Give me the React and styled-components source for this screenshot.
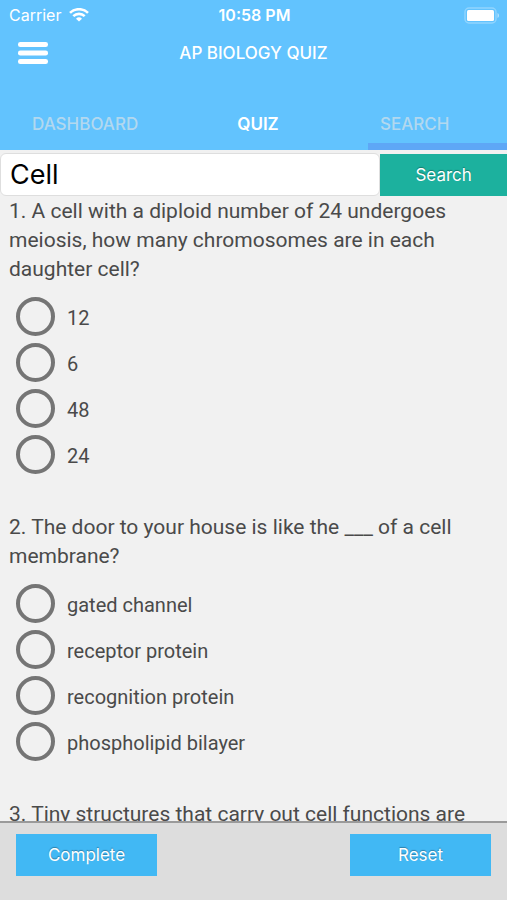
import React, { useState } from "react";
import styled, { createGlobalStyle } from "styled-components";

const GlobalStyle = createGlobalStyle`
  *, *::before, *::after { box-sizing: border-box; }
  body {
    margin: 0;
    background: #f1f1f1;
    color: #4a4a4a;
    font-family: Inter, Roboto, "Liberation Sans", sans-serif;
  }
  button, input { font-family: inherit; }
`;

const Screen = styled.div`
  display: flex;
  flex-direction: column;
  height: 100vh;
`;

const Header = styled.header`
  flex: none;
  background: #62c3fe;
  color: #fff;
`;

const StatusBar = styled.div`
  display: grid;
  grid-template-columns: 1fr auto 1fr;
  align-items: center;
  height: 30px;
  padding: 0 7px 0 9px;
  font-size: 16px;
  line-height: 20px;
`;

const Carrier = styled.span`
  display: flex;
  align-items: center;
  gap: 8px;
`;

const Clock = styled.time`
  font-weight: 600;
  font-size: 16px;
`;

const BatteryIcon = styled.svg`
  justify-self: end;
`;

const TitleBar = styled.div`
  display: grid;
  grid-template-columns: 1fr auto 1fr;
  align-items: center;
  height: 46px;
  padding: 0 18px;
`;

const MenuButton = styled.button`
  display: flex;
  width: 30px;
  padding: 0;
  border: 0;
  background: none;
  color: inherit;
  cursor: pointer;
`;

const Title = styled.h1`
  margin: 0;
  font-size: 17px;
  line-height: 24px;
  font-weight: 500;
`;

const Tabs = styled.nav`
  display: grid;
  grid-template-columns: 148fr 220fr 139fr;
  height: 74px;
`;

const Tab = styled.a`
  display: flex;
  align-items: flex-end;
  justify-content: ${(p) => (p.$inset ? "flex-start" : "center")};
  padding: 0 0 9px ${(p) => p.$inset || 0}px;
  border-bottom: 7px solid ${(p) => (p.$marked ? "#5ea7f6" : "transparent")};
  color: ${(p) => (p.$active ? "#fff" : "#b2d8ef")};
  font-size: 17px;
  line-height: 20px;
  font-weight: ${(p) => (p.$active ? 600 : 500)};
  text-decoration: none;
`;

const SearchForm = styled.form`
  flex: none;
  display: grid;
  grid-template-columns: 3fr 1fr;
  height: 46px;
  padding-top: 3px;
`;

const SearchInput = styled.input`
  min-width: 0;
  padding: 0 9px;
  border: 1px solid #dedede;
  border-radius: 6px;
  background: #fff;
  color: #000;
  font-size: 27px;
  outline: none;
`;

const Button = styled.button`
  height: 42px;
  padding: 0;
  border: 0;
  background: ${(p) => (p.$accent ? "#1cb19e" : "#41b8f4")};
  color: #fff;
  font-size: 17px;
  text-shadow: 0 -1px 1px rgba(0, 0, 0, 0.3);
  cursor: pointer;
`;

const SearchButton = styled(Button)`
  align-self: end;
`;

const Quiz = styled.main`
  flex: 1;
  min-height: 0;
  overflow-y: auto;
  scrollbar-width: none;
  padding: 1px 9px 0;
  font-family: Roboto, Inter, "Liberation Sans", sans-serif;
`;

const Question = styled.fieldset`
  min-width: 0;
  margin: 0 0 32px;
  padding: 0;
  border: 0;
`;

const Prompt = styled.legend`
  padding: 0;
  margin-bottom: 13px;
  font-size: 21px;
  line-height: 29px;
`;

const Option = styled.label`
  display: flex;
  align-items: center;
  gap: 12px;
  height: 46px;
  padding: 0 0 8px 7px;
  font-size: 20px;
  line-height: 24px;
`;

const OptionText = styled.span`
  padding-top: 3px;
`;

const Radio = styled.input`
  appearance: none;
  flex: none;
  width: 39px;
  height: 39px;
  margin: 0;
  border: 4px solid #757575;
  border-radius: 50%;
  &:checked {
    background: radial-gradient(circle, #757575 45%, transparent 50%);
  }
`;

const Footer = styled.footer`
  flex: none;
  display: flex;
  justify-content: space-between;
  padding: 11px 16px 24px;
  border-top: 2px solid #9a9a9a;
  background: #dddddd;
`;

const FooterButton = styled(Button)`
  width: 141px;
`;

const questions = [
  {
    text: "1. A cell with a diploid number of 24 undergoes meiosis, how many chromosomes are in each daughter cell?",
    options: ["12", "6", "48", "24"],
  },
  {
    text: "2. The door to your house is like the ___ of a cell membrane?",
    options: ["gated channel", "receptor protein", "recognition protein", "phospholipid bilayer"],
  },
  { text: "3. Tiny structures that carry out cell functions are", options: [] },
];

function Wifi() {
  return (
    <svg width="20" height="14" viewBox="0 0 20 14" fill="none" stroke="currentColor" strokeWidth="2.6" aria-hidden="true">
      <path d="M1 4.9a12.8 12.8 0 0 1 18 0" />
      <path d="M4.3 8.2a8.1 8.1 0 0 1 11.4 0" />
      <path d="M10 13.6 7 10.7a4.3 4.3 0 0 1 6 0Z" fill="currentColor" stroke="none" />
    </svg>
  );
}

function Battery() {
  return (
    <BatteryIcon width="36" height="17" viewBox="0 0 36 17" aria-hidden="true">
      <rect x="1" y="1" width="31" height="15" rx="4" fill="none" stroke="#fff" strokeOpacity="0.3" strokeWidth="1.4" />
      <rect x="3" y="3" width="27" height="11" rx="1.5" fill="#fff" />
      <path d="M33.5 6c2 .8 2 4.2 0 5Z" fill="#fff" fillOpacity="0.5" />
    </BatteryIcon>
  );
}

function MenuIcon() {
  return (
    <svg width="30" height="22" viewBox="0 0 30 22" fill="#fff" aria-hidden="true">
      <rect width="30" height="5" rx="2.3" />
      <rect y="8.5" width="30" height="5" rx="2.3" />
      <rect y="17" width="30" height="5" rx="2.3" />
    </svg>
  );
}

export default function App() {
  const [query, setQuery] = useState("Cell");
  return (
    <Screen>
      <GlobalStyle />
      <Header>
        <StatusBar>
          <Carrier>Carrier <Wifi /></Carrier>
          <Clock>10:58 PM</Clock>
          <Battery />
        </StatusBar>
        <TitleBar>
          <MenuButton type="button" aria-label="Menu"><MenuIcon /></MenuButton>
          <Title>AP BIOLOGY QUIZ</Title>
        </TitleBar>
        <Tabs>
          <Tab href="#dashboard" $inset={32}>DASHBOARD</Tab>
          <Tab href="#quiz" $active>QUIZ</Tab>
          <Tab href="#search" $inset={12} $marked>SEARCH</Tab>
        </Tabs>
      </Header>
      <SearchForm onSubmit={(e) => e.preventDefault()}>
        <SearchInput aria-label="Search questions" value={query} onChange={(e) => setQuery(e.target.value)} />
        <SearchButton type="submit" $accent>Search</SearchButton>
      </SearchForm>
      <Quiz>
        {questions.map((question, index) => (
          <Question key={question.text}>
            <Prompt>{question.text}</Prompt>
            {question.options.map((option) => (
              <Option key={option}>
                <Radio type="radio" name={`question-${index}`} value={option} />
                <OptionText>{option}</OptionText>
              </Option>
            ))}
          </Question>
        ))}
      </Quiz>
      <Footer>
        <FooterButton type="button">Complete</FooterButton>
        <FooterButton type="reset">Reset</FooterButton>
      </Footer>
    </Screen>
  );
}
